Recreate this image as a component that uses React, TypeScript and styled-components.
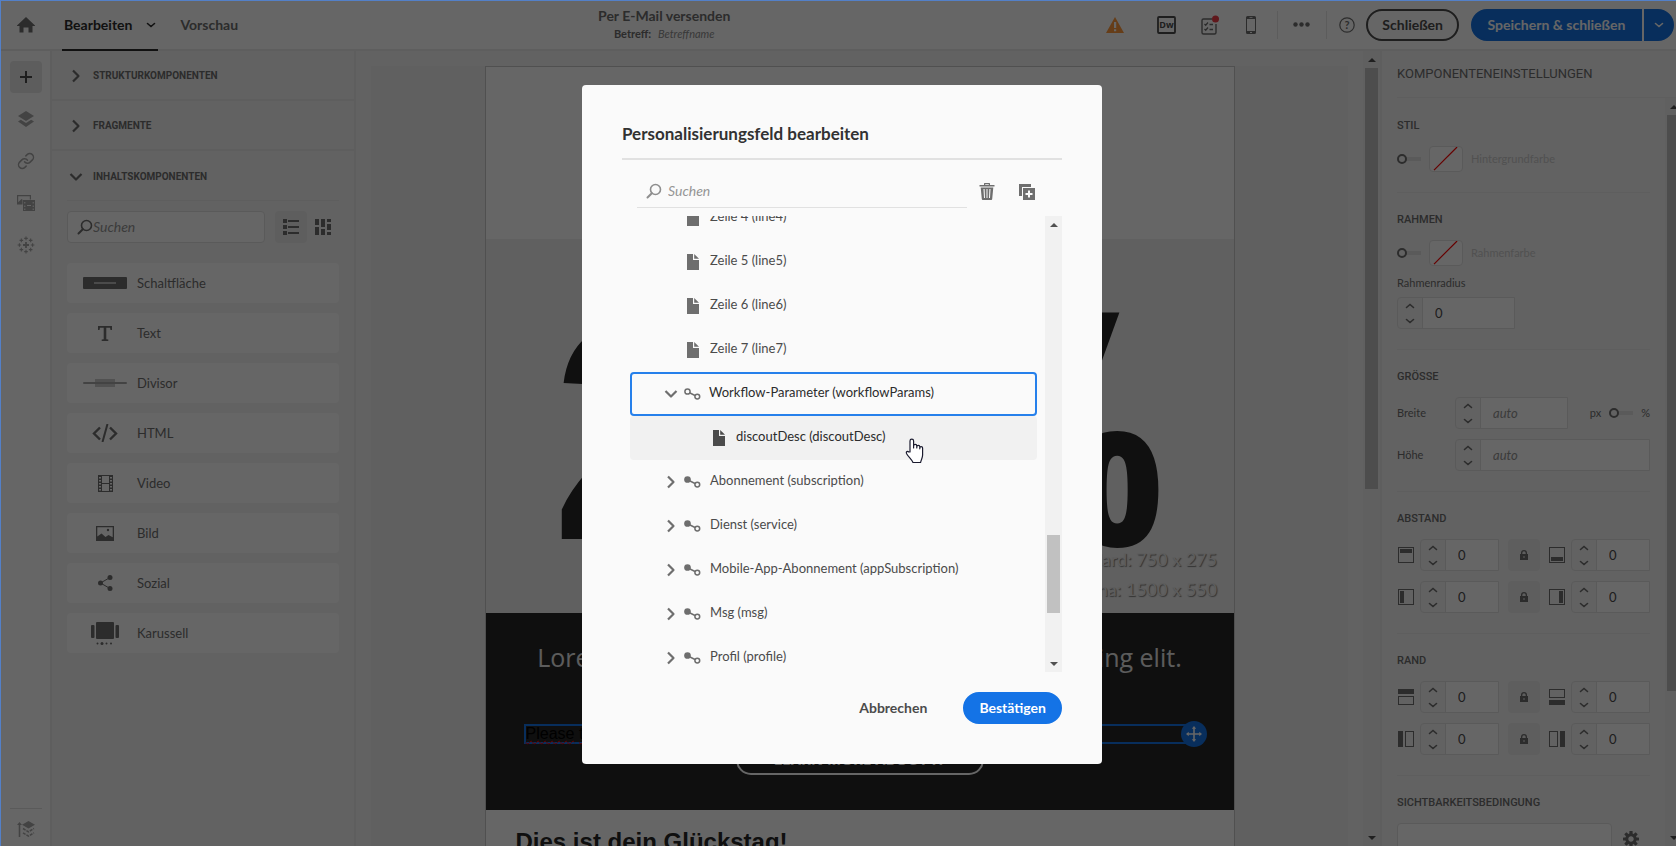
import React from 'react';
import styled, { createGlobalStyle } from 'styled-components';
import { Link } from 'lucide-react';

const GlobalStyle = createGlobalStyle`
  *, *::before { box-sizing: border-box; }
  body {
    margin: 0;
    overflow: hidden;
    font-family: Lato, "Open Sans", sans-serif;
    font-size: 13px;
    line-height: 18px;
    color: #6e6e6e;
    background: #f5f5f5;
  }
  button, input { font: inherit; color: inherit; }
  button { border: 0; padding: 0; background: none; cursor: pointer; }
  h1, h2, h3, p, ul { margin: 0; padding: 0; font-weight: inherit; font-size: inherit; }
  ul { list-style: none; }
  svg { display: block; flex: none; }
`;

/* ---------- icons ---------- */

type IconProps = { children: React.ReactNode; w?: number; h?: number; box?: string };
const Svg = ({ children, w = 16, h = 16, box }: IconProps) => (
  <svg width={w} height={h} viewBox={box ?? `0 0 ${w} ${h}`} fill="currentColor" aria-hidden="true">
    {children}
  </svg>
);

const HomeIcon = () => (
  <Svg w={18} h={16}><path d="M9 0l9 8.6V9h-2.500v6.500h-4v-5h-5v5h-4V9H0v-.4z" /></Svg>
);
const ChevronRight = () => (
  <Svg w={14} h={14}><path d="M4 1.500L9.500 7 4 12.500" fill="none" stroke="currentColor" strokeWidth="2.200" strokeLinejoin="round" /></Svg>
);
const ChevronDown = () => (
  <Svg w={14} h={14}><path d="M1.500 4L7 9.500 12.500 4" fill="none" stroke="currentColor" strokeWidth="2.200" strokeLinejoin="round" /></Svg>
);
const SmallChevron = ({ up }: { up?: boolean }) => (
  <Svg w={10} h={6}><path d={up ? 'M1.500 4.500L5 1.500l3.500 3' : 'M1.500 1.500L5 4.500l3.500-3'} fill="none" stroke="currentColor" strokeWidth="1.600" strokeLinecap="round" /></Svg>
);
const PlusIcon = () => <Svg w={12} h={12}><path d="M5 0h2v5h5v2H7v5H5V7H0V5h5z" /></Svg>;
const LayersIcon = () => (
  <Svg><path d="M8 0l8 5-8 5-8-5z" /><path d="M2.800 8.800L8 12l5.200-3.200L16 10.600 8 16l-8-5.400z" /></Svg>
);
const MediaIcon = () => (
  <Svg w={18} h={16}>
    <path d="M0 0h14v4.500h-1.200V1.200H1.200v6L4.500 4l1 .8V9.500H0z" />
    <path d="M6 5h12v11H6zm1.300 2v1.500h1V7zm0 3.500V12h1v-1.500zm0 3V15h1v-1.500zM15.700 7v1.500h1V7zm0 3.500V12h1v-1.500zm0 3V15h1v-1.500zM10 10v1h4v-1z" fillRule="evenodd" />
  </Svg>
);
const SparkIcon = () => (
  <Svg box="-9 -9 18 18" w={18} h={18}>
    <path d="M-.9-3h1.800v2.100H3v1.800H.9V3H-.9V.9H-3V-.9h2.100z" />
    {[0, 45, 90, 135, 180, 225, 270, 315].map((a) => {
      const x = 6.6 * Math.cos((a * Math.PI) / 180);
      const y = 6.6 * Math.sin((a * Math.PI) / 180);
      return <path key={a} d={`M${x - 1.8} ${y}h3.600M${x} ${y - 1.8}v3.600`} stroke="currentColor" strokeWidth="1.100" />;
    })}
  </Svg>
);
const TreeOrderIcon = () => (
  <Svg w={18} h={17}>
    <path d="M2.500 1L5 4H3.300v12H1.700V4H0z" />
    <path d="M11.500 0L18 3.800l-6.500 3.800L5 3.800z" />
    <path d="M6 7.500l5.500 3.300L17 7.500M6 11.800l5.500 3.300 5.500-3.300" fill="none" stroke="currentColor" strokeWidth="1.500" strokeDasharray="3 1" />
  </Svg>
);
const SearchIcon = () => (
  <Svg><circle cx="9.500" cy="6.500" r="5" fill="none" stroke="currentColor" strokeWidth="1.600" /><path d="M5.800 10.200L1.500 14.500" stroke="currentColor" strokeWidth="2" strokeLinecap="round" /></Svg>
);
const ListIcon = () => (
  <Svg>{[0, 6, 12].map((y) => <path key={y} d={`M0 ${y}h4v4H0zM5 ${y + 1}h11v2H5z`} />)}</Svg>
);
const GridIcon = () => (
  <Svg><path d="M0 0h4v6H0zM0 8h4v8H0zM6 0h4v8H6zM6 10h4v6H6zM12 0h4v3h-4zM12 5h4v6h-4zM12 13h4v3h-4z" /></Svg>
);
const WarningIcon = () => (
  <Svg w={18} h={16}><path d="M9 0l9 16H0zM8 5v6h2.200V5zm0 7.300v2h2.200v-2z" fillRule="evenodd" /></Svg>
);
const DwIcon = () => (
  <Svg w={19} h={18}>
    <rect x="1" y="1" width="17" height="16" rx="1" fill="none" stroke="#4b4b4b" strokeWidth="1.800" />
    <text x="9.500" y="12" textAnchor="middle" fill="#4b4b4b" fontSize="9" fontWeight="700" fontFamily="Open Sans, sans-serif">Dw</text>
  </Svg>
);
const TasksIcon = () => (
  <Svg w={19} h={20}>
    <path d="M12 4H3.500A1.500 1.500 0 002 5.500v12A1.500 1.500 0 003.500 19h11a1.500 1.500 0 001.500-1.500V9" fill="none" stroke="currentColor" strokeWidth="1.400" />
    <path d="M4.500 9l1.200 1.200L8 7.500M4.500 14l1.200 1.200L8 12.500M9.500 9.500H13M9.500 14.500H13" fill="none" stroke="currentColor" strokeWidth="1.300" />
    <circle cx="15.500" cy="4" r="3.500" fill="#f03c46" />
  </Svg>
);
const PhoneIcon = () => (
  <Svg w={10} h={18}><path d="M1.500 0h7A1.500 1.500 0 0110 1.500v15A1.500 1.500 0 018.500 18h-7A1.500 1.500 0 010 16.500v-15A1.500 1.500 0 011.500 0zM1 3v12h8V3zm2.500-1.800v.8h3v-.8zM4 16v1h2v-1z" fillRule="evenodd" /></Svg>
);
const DotsIcon = () => (
  <Svg w={17} h={5}><circle cx="2.500" cy="2.500" r="2.200" /><circle cx="8.500" cy="2.500" r="2.200" /><circle cx="14.500" cy="2.500" r="2.200" /></Svg>
);
const HelpIcon = () => (
  <Svg>
    <circle cx="8" cy="8" r="7.200" fill="none" stroke="currentColor" strokeWidth="1.200" />
    <text x="8" y="12" textAnchor="middle" fontSize="11" fontWeight="700">?</text>
  </Svg>
);
const LockIcon = () => (
  <Svg w={10} h={10}><path d="M2 4V3a3 3 0 016 0v1h1v6H1V4zm1.300 0h3.400V3a1.700 1.700 0 00-3.400 0zM4.500 6v2h1V6z" fillRule="evenodd" /></Svg>
);
const GearIcon = () => (
  <Svg box="-8 -8 16 16">
    {[0, 45, 90, 135, 180, 225, 270, 315].map((a) => <rect key={a} x="-1.600" y="-8" width="3.200" height="5" rx=".5" transform={`rotate(${a})`} />)}
    <circle r="4.200" fill="none" stroke="currentColor" strokeWidth="3" />
  </Svg>
);
const TrashIcon = () => (
  <Svg w={16} h={17}>
    <path d="M5 2V.6A.6.6 0 015.600 0h4.800a.6.6 0 01.6.6V2h4.500v1.500H.5V2zm1.200 0h3.600v-.8H6.200z" fillRule="evenodd" />
    <path d="M1.700 4.500h12.600L13.200 16a1 1 0 01-1 1H3.800a1 1 0 01-1-1zM4.500 6l.5 9h1l-.4-9zm3 0v9h1V6zm2.900 0l-.4 9h1l.5-9z" fillRule="evenodd" />
  </Svg>
);
const AddCopyIcon = () => (
  <Svg><path d="M0 0h12v3H3v9H0z" /><path d="M4 4h12v12H4zm5 2.500V9H6.500v2H9v2.500h2V11h2.500V9H11V6.500z" fillRule="evenodd" /></Svg>
);
const FileIcon = () => <Svg w={12} h={16}><path d="M0 0h6v6h6v10H0z" /><path d="M7.200 0L12 4.800H7.200z" /></Svg>;
const LinkNodeIcon = ({ open }: { open?: boolean }) => (
  <Svg w={17} h={12}>
    <path d="M3 3.500l10 5" stroke="currentColor" strokeWidth="1.400" />
    <circle cx="3.500" cy="3.500" r="2.600" fill={open ? '#fafafa' : 'currentColor'} stroke="currentColor" strokeWidth="1.500" />
    <circle cx="13.300" cy="8.600" r="2.400" fill="#fafafa" stroke="currentColor" strokeWidth="1.500" />
  </Svg>
);
const MoveIcon = () => (
  <Svg><path d="M8 0l2.200 2.700H8.800v4.500h4.500V5.800L16 8l-2.700 2.200V8.800H8.800v4.500h1.400L8 16l-2.200-2.700h1.400V8.800H2.700v1.400L0 8l2.700-2.200v1.400h4.500V2.700H5.800z" /></Svg>
);

const ButtonGlyph = () => (
  <Svg w={44} h={12}><rect width="44" height="12" rx="1" /><rect x="11" y="5" width="22" height="2" fill="#bbb" /></Svg>
);
const TextGlyph = () => <Svg w={14} h={15}><path d="M0 0h14v4h-1.500l-.5-2.200H8.300v11.400l2 .4V15H3.700v-1.400l2-.4V1.800H2L1.500 4H0z" /></Svg>;
const DividerGlyph = () => (
  <Svg w={44} h={8}><rect x="12" width="20" height="8" fill="#cacaca" /><rect y="3" width="44" height="2" rx="1" fill="#a8a8a8" /></Svg>
);
const HtmlGlyph = () => (
  <Svg w={26} h={18}><path d="M8 3.500L2 9.500l6 6M18 3.500l6 6-6 6" fill="none" stroke="currentColor" strokeWidth="2.400" /><path d="M15.500 0l-5 18" stroke="currentColor" strokeWidth="2" /></Svg>
);
const VideoGlyph = () => (
  <Svg w={15} h={17}><path d="M0 0h15v17H0zM4 1v7h7V1zm0 8v7h7V9zM1 2v1.500h2V2zm0 3v1.500h2V5zm0 3v1.500h2V8zm0 3v1.500h2V11zm0 3v1.500h2V14zm11-12v1.500h2V2zm0 3v1.500h2V5zm0 3v1.500h2V8zm0 3v1.500h2V11zm0 3v1.500h2V14z" fillRule="evenodd" /></Svg>
);
const ImageGlyph = () => (
  <Svg w={18} h={15}><path d="M0 0h18v15H0zM1.300 1.300v9.200L5.500 7.500l4 3.500 3-2 4.200 2.200V1.300z" fillRule="evenodd" /><circle cx="12" cy="4" r="1.200" /></Svg>
);
const ShareGlyph = () => (
  <Svg w={15} h={16}><circle cx="2.500" cy="8" r="2.500" /><circle cx="12" cy="2.500" r="2.500" /><circle cx="12" cy="13.500" r="2.500" /><path d="M12 2.500L2.500 8l9.500 5.500" fill="none" stroke="currentColor" /></Svg>
);
const CarouselGlyph = () => (
  <Svg w={28} h={23}>
    <rect x="5" width="18" height="17" rx="1" /><rect y="3" width="3.500" height="13" rx="1" /><rect x="24.500" y="3" width="3.500" height="13" rx="1" />
    <circle cx="6.500" cy="21.500" r="1" /><circle cx="11" cy="21.500" r="1.500" /><circle cx="15.500" cy="21.500" r="1" /><circle cx="20" cy="21.500" r="1" />
  </Svg>
);

/* ---------- shell ---------- */

const Page = styled.div`
  display: flex;
  flex-direction: column;
  height: 100vh;
  overflow: hidden;
`;
const Header = styled.header`
  display: flex;
  flex: none;
  align-items: stretch;
  justify-content: space-between;
  height: 51px;
  padding: 0 2px 0 17px;
  background: #fff;
  border-bottom: 2px solid #eaeaea;
`;
const HeaderGroup = styled.div`
  display: flex;
  align-items: center;
`;
const Tabs = styled.nav`
  display: flex;
  align-self: stretch;
  gap: 20px;
  margin: 0 0 -2px 27px;
  font-size: 14px;
  font-weight: 700;
`;
const Tab = styled.button<{ $active?: boolean }>`
  display: flex;
  align-items: center;
  gap: 14px;
  padding: 1px 2px 0;
  color: ${(p) => (p.$active ? '#2c2c2c' : '#6e6e6e')};
  border-bottom: 2px solid ${(p) => (p.$active ? '#2c2c2c' : 'transparent')};
`;
const TitleBlock = styled.div`
  padding-top: 7px;
  text-align: center;
`;
const PageTitle = styled.h1`
  font-size: 14px;
  font-weight: 700;
`;
const Subject = styled.p`
  font-size: 11px;
  em { margin-left: 4px; color: #8e8e8e; }
`;
const Tools = styled(HeaderGroup)`
  padding-left: 18px;
`;
const Tool = styled.button<{ $space: number; $warn?: boolean }>`
  display: flex;
  margin-right: ${(p) => p.$space}px;
  color: ${(p) => (p.$warn ? '#ff9a3c' : '#6e6e6e')};
`;
const Rule = styled.span<{ $space: number }>`
  width: 1px;
  height: 28px;
  margin-right: ${(p) => p.$space}px;
  background: #e6e6e6;
`;
const Pill = styled.button<{ $primary?: boolean }>`
  height: 32px;
  padding: 0 14px;
  border: 2px solid ${(p) => (p.$primary ? '#1473e6' : '#4b4b4b')};
  border-radius: 16px;
  background: ${(p) => (p.$primary ? '#1473e6' : 'transparent')};
  color: ${(p) => (p.$primary ? '#fff' : '#4b4b4b')};
  font-size: 14px;
  font-weight: 700;
  white-space: nowrap;
`;
const SplitButton = styled.div`
  display: flex;
  gap: 2px;
  margin-left: 12px;
  ${Pill}:first-child { width: 171px; padding: 0; border-radius: 16px 0 0 16px; }
  ${Pill}:last-child { display: flex; align-items: center; padding: 0 8px; border-radius: 0 16px 16px 0; }
`;

const Body = styled.div`
  display: flex;
  flex: 1;
  min-height: 0;
`;
const Rail = styled.nav`
  display: flex;
  flex: none;
  flex-direction: column;
  justify-content: space-between;
  width: 52px;
  padding: 10px 8px 0 10px;
  background: #fff;
  border-right: 2px solid #eaeaea;
`;
const RailList = styled.div`
  display: flex;
  flex-direction: column;
  gap: 10px;
`;
const RailButton = styled.button<{ $active?: boolean }>`
  display: flex;
  align-items: center;
  justify-content: center;
  width: 32px;
  height: 32px;
  border-radius: 4px;
  background: ${(p) => (p.$active ? '#e8e8e8' : 'transparent')};
  color: ${(p) => (p.$active ? '#4b4b4b' : '#a8a8a8')};
`;
const RailFooter = styled.div`
  height: 38px;
  padding-top: 4px;
  border-top: 1px solid #e1e1e1;
`;

/* ---------- component library ---------- */

const Library = styled.aside`
  flex: none;
  width: 304px;
  border-right: 2px solid #eaeaea;
`;
const Accordion = styled.button<{ $open?: boolean }>`
  display: flex;
  align-items: center;
  gap: 10px;
  width: ${(p) => (p.$open ? '272px' : '100%')};
  height: 50px;
  margin-left: ${(p) => (p.$open ? '15px' : '0')};
  padding: 2px 0 0 ${(p) => (p.$open ? '2px' : '17px')};
  border-bottom: ${(p) => (p.$open ? '1px' : '2px')} solid #eaeaea;
  font-family: Roboto, sans-serif;
  font-size: 10px;
  font-weight: 700;
  text-transform: uppercase;
`;
const LibraryBody = styled.div`
  padding: 10px 15px;
`;
const FilterRow = styled.div`
  display: flex;
  align-items: center;
  margin-bottom: 20px;
`;
const SearchBox = styled.label`
  display: flex;
  flex: 1;
  min-width: 0;
  align-items: center;
  height: 32px;
  margin-right: 10px;
  padding-left: 9px;
  border: 1px solid #e1e1e1;
  border-radius: 4px;
  background: #fff;
`;
const SearchInput = styled.input`
  flex: 1;
  width: 100%;
  min-width: 0;
  padding: 0;
  border: 0;
  outline: 0;
  background: none;
  font-size: 14px;
  &::placeholder { color: #959595; font-style: italic; opacity: 1; }
`;
const SquareButton = styled.button<{ $fill?: boolean }>`
  display: flex;
  flex: none;
  align-items: center;
  justify-content: center;
  justify-self: center;
  width: 32px;
  height: 32px;
  border-radius: 4px;
  background: ${(p) => (p.$fill ? '#ebebeb' : 'transparent')};
`;
const CardList = styled.ul`
  display: flex;
  flex-direction: column;
  gap: 10px;
`;
const Card = styled.li`
  display: grid;
  grid-template-columns: 44px 1fr;
  align-items: center;
  gap: 10px;
  height: 40px;
  padding-left: 16px;
  border-radius: 4px;
  background: #fff;
  svg { justify-self: center; }
`;

/* ---------- canvas ---------- */

const Canvas = styled.main`
  display: flex;
  flex: 1;
  min-width: 0;
`;
const Stage = styled.div`
  flex: 1;
  min-width: 0;
  margin: 15px 15px 0;
  background: #f0f0f0;
`;
const Mail = styled.article`
  width: 750px;
  max-width: 100%;
  margin: 0 auto;
  border: 1px solid #c8c8c8;
  border-bottom: 0;
  background: #fff;
`;
const MailTop = styled.div`
  height: 172px;
`;
const Banner = styled.svg`
  width: 100%;
  height: auto;
  background: #efefef;
`;
const BannerFigure = styled.g`
  fill: #282828;
  font-family: "Open Sans", sans-serif;
  font-weight: 800;
`;
const BannerCaption = styled.g`
  fill: #e8e8e8;
  font-size: 18px;
  text-anchor: end;
  text-shadow: 1px 1px 1px #808080;
`;
const MailDark = styled.section`
  display: flex;
  flex-direction: column;
  align-items: center;
  height: 197px;
  padding: 27px 38px 0;
  background: #262626;
`;
const Lead = styled.p`
  height: 84px;
  font-family: "Open Sans", sans-serif;
  font-size: 25px;
  line-height: 34px;
  color: #e6e6e6;
  white-space: nowrap;
`;
const SelectedText = styled.div`
  position: relative;
  width: 100%;
  height: 20px;
  border: 2px solid #1473e6;
  font-family: "Liberation Sans", sans-serif;
  font-size: 16px;
  line-height: 16px;
  color: #000;
  span { text-decoration: underline wavy #f00 1px; }
`;
const MoveHandle = styled.button`
  position: absolute;
  top: -5px;
  right: -13px;
  display: flex;
  align-items: center;
  justify-content: center;
  width: 26px;
  height: 26px;
  border-radius: 50%;
  background: #1473e6;
  color: #fff;
`;
const MailButton = styled.a`
  width: 248px;
  height: 30px;
  margin-top: 1px;
  border: 2px solid #fff;
  border-radius: 15px;
  color: #fff;
  font-family: "Open Sans", sans-serif;
  font-size: 15px;
  font-weight: 700;
  line-height: 24px;
  text-align: center;
  text-decoration: none;
`;
const MailHeading = styled.h2`
  padding: 17px 30px;
  color: #262626;
  font-family: "Liberation Sans", sans-serif;
  font-size: 24px;
  font-weight: 700;
  line-height: 30px;
`;

/* ---------- scrollbar ---------- */

const Track = styled.div<{ $clip?: boolean }>`
  display: flex;
  flex: none;
  flex-direction: column;
  align-items: ${(p) => (p.$clip ? 'flex-start' : 'center')};
  width: ${(p) => (p.$clip ? '11px' : '17px')};
  padding: 0 ${(p) => (p.$clip ? '0 0 2px' : '0')};
  background: #f1f1f1;
  overflow: hidden;
`;
const ArrowCell = styled.span`
  display: flex;
  flex: none;
  align-items: center;
  justify-content: center;
  width: 13px;
  height: 17px;
  color: #505050;
`;
const Thumb = styled.div<{ $before: number; $size: number }>`
  flex: none;
  width: 13px;
  height: ${(p) => p.$size}%;
  margin-top: ${(p) => p.$before}px;
  background: #c1c1c1;
`;
const Fill = styled.span`
  flex: 1;
`;
const Scrollbar = ({ before = 0, size, clip }: { before?: number; size: number; clip?: boolean }) => (
  <Track $clip={clip} aria-hidden="true">
    <ArrowCell><Svg w={8} h={4}><path d="M0 4l4-4 4 4z" /></Svg></ArrowCell>
    <Thumb $before={before} $size={size} />
    <Fill />
    <ArrowCell><Svg w={8} h={4}><path d="M0 0l4 4 4-4z" /></Svg></ArrowCell>
  </Track>
);

/* ---------- settings ---------- */

const Settings = styled.aside`
  display: flex;
  flex: none;
  flex-direction: column;
  width: 296px;
  border-left: 2px solid #eaeaea;
`;
const SettingsTitle = styled.h2`
  height: 47px;
  margin-left: 15px;
  padding-top: 14px;
  border-bottom: 1px solid #eaeaea;
  font-family: Roboto, sans-serif;
  font-size: 13px;
`;
const SettingsBody = styled.div`
  display: flex;
  flex: 1;
  min-height: 0;
  overflow: hidden;
`;
const Sections = styled.div`
  flex: 1;
  margin: 0 15px;
  padding-top: 1px;
`;
const Section = styled.section`
  padding: 18px 0 20px;
  border-bottom: 1px solid #eaeaea;
`;
const SectionTitle = styled.h3`
  margin-bottom: 11px;
  font-family: Roboto, sans-serif;
  font-size: 11px;
  font-weight: 500;
  text-transform: uppercase;
`;
const ColorRow = styled.label`
  display: flex;
  align-items: center;
  height: 26px;
  color: #cacaca;
  font-size: 11px;
`;
const Toggle = styled.input`
  display: flex;
  align-items: center;
  width: 24px;
  height: 10px;
  margin: 0;
  appearance: none;
  background: linear-gradient(#e1e1e1, #e1e1e1) right center / 18px 4px no-repeat;
  &::before {
    width: 10px;
    height: 10px;
    border: 2px solid #6e6e6e;
    border-radius: 50%;
    background: #f5f5f5;
    content: "";
  }
`;
const Swatch = styled.svg`
  margin: 0 8px;
  border: 1px solid #e1e1e1;
  border-radius: 4px;
  background: #fff;
`;
const FieldLabel = styled.label`
  display: block;
  padding: 8px 0 5px;
  font-size: 11px;
`;
const StepperBox = styled.div`
  display: flex;
  min-width: 0;
  height: 32px;
  border: 1px solid #e1e1e1;
  border-radius: 4px 0 0 4px;
`;
const StepperButtons = styled.div`
  display: flex;
  flex: none;
  flex-direction: column;
  justify-content: space-between;
  width: 25px;
  padding: 5px 0 4px;
  border-right: 1px solid #e1e1e1;
  button { display: flex; justify-content: center; }
`;
const StepperInput = styled.input`
  flex: 1;
  min-width: 0;
  width: 100%;
  padding: 0 12px;
  border: 0;
  border-radius: 0;
  outline: 0;
  background: #fff;
  color: #4b4b4b;
  font-size: 13px;
  &::placeholder { color: #959595; font-style: italic; opacity: 1; }
`;
const Radius = styled.div`
  width: 118px;
`;
const SizeRow = styled.div`
  display: grid;
  grid-template-columns: 58px 113px 1fr;
  align-items: center;
  font-size: 11px;
  & + & { grid-template-columns: 58px 1fr; margin-top: 10px; }
`;
const Unit = styled.label`
  display: flex;
  align-items: center;
  justify-content: flex-end;
  gap: 8px;
`;
const PairGrid = styled.div`
  display: grid;
  grid-template-columns: 23px 79px 1fr 23px 79px;
  align-items: center;
  row-gap: 10px;
`;
const ConditionRow = styled.div`
  display: flex;
  align-items: center;
  justify-content: space-between;
  padding-right: 11px;
`;
const ConditionInput = styled.input`
  width: 215px;
  height: 32px;
  border: 1px solid #e1e1e1;
  border-radius: 4px;
  background: #fff;
`;

const Stepper = ({ id, label, value, placeholder }: { id: string; label: string; value?: string; placeholder?: string }) => (
  <StepperBox>
    <StepperButtons>
      <button type="button" aria-label={`${label} erhöhen`}><SmallChevron up /></button>
      <button type="button" aria-label={`${label} verringern`}><SmallChevron /></button>
    </StepperButtons>
    <StepperInput id={id} aria-label={label} defaultValue={value} placeholder={placeholder} />
  </StepperBox>
);

const Frame = <rect x="1.500" y="1.500" width="15" height="15" fill="none" stroke="currentColor" />;
const sides: Record<string, React.ReactNode> = {
  'Abstand oben': <>{Frame}<rect x="3" y="3" width="12" height="4" /></>,
  'Abstand unten': <>{Frame}<rect x="3" y="11" width="12" height="4" /></>,
  'Abstand links': <>{Frame}<rect x="3" y="3" width="4" height="12" /></>,
  'Abstand rechts': <>{Frame}<rect x="11" y="3" width="4" height="12" /></>,
  'Rand oben': <><rect x="1" y="1" width="16" height="5" /><rect x="1.500" y="8.500" width="15" height="8" fill="none" stroke="currentColor" /></>,
  'Rand unten': <><rect x="1" y="12" width="16" height="5" /><rect x="1.500" y="1.500" width="15" height="8" fill="none" stroke="currentColor" /></>,
  'Rand links': <><rect x="1" y="1" width="5" height="16" /><rect x="8.500" y="1.500" width="8" height="15" fill="none" stroke="currentColor" /></>,
  'Rand rechts': <><rect x="12" y="1" width="5" height="16" /><rect x="1.500" y="1.500" width="8" height="15" fill="none" stroke="currentColor" /></>,
};

const SidePair = ({ a, b }: { a: string; b: string }) => (
  <>
    <Svg w={18} h={18}>{sides[a]}</Svg>
    <Stepper id={a.replace(' ', '-')} label={a} value="0" />
    <SquareButton $fill aria-label={`${a} und ${b} verknüpfen`}><LockIcon /></SquareButton>
    <Svg w={18} h={18}>{sides[b]}</Svg>
    <Stepper id={b.replace(' ', '-')} label={b} value="0" />
  </>
);

const ColorField = ({ label }: { label: string }) => (
  <ColorRow>
    <Toggle type="checkbox" />
    <Swatch width="34" height="26" viewBox="0 0 34 26"><path d="M4 25L29 0" stroke="#f00" strokeWidth="1.300" /></Swatch>
    {label}
  </ColorRow>
);

/* ---------- dialog ---------- */

const Overlay = styled.div`
  position: fixed;
  inset: 0;
  display: flex;
  align-items: center;
  justify-content: center;
  padding: 3px 0 0 8px;
  background: rgba(0, 0, 0, 0.6);
`;
const Dialog = styled.section`
  position: relative;
  width: 520px;
  padding: 40px;
  border-radius: 4px;
  background: #fafafa;
`;
const DialogTitle = styled.h2`
  height: 35px;
  margin-bottom: 15px;
  border-bottom: 2px solid #e1e1e1;
  color: #323232;
  font-size: 17px;
  font-weight: 700;
`;
const DialogTools = styled.div`
  display: flex;
  align-items: center;
  gap: 24px;
  margin-bottom: 8px;
  padding: 0 27px 0 15px;
`;
const DialogSearch = styled.label`
  display: flex;
  flex: 1;
  align-items: center;
  gap: 6px;
  height: 33px;
  margin-right: -12px;
  padding-left: 9px;
  border-bottom: 1px solid #e1e1e1;
  color: #8e8e8e;
`;
const TreeArea = styled.div`
  display: flex;
  gap: 8px;
  height: 456px;
  padding-left: 8px;
  overflow: hidden;
`;
const Tree = styled.ul`
  flex: 1;
  margin-top: -20px;
`;
const TreeRow = styled.li<{ $depth: number; $focus?: boolean; $hover?: boolean }>`
  display: flex;
  align-items: center;
  gap: 6px;
  height: 44px;
  padding-left: ${(p) => p.$depth}px;
  border: 2px solid ${(p) => (p.$focus ? '#2680eb' : 'transparent')};
  border-radius: 4px;
  background: ${(p) => (p.$hover ? '#f1f1f1' : 'transparent')};
  color: ${(p) => (p.$hover ? '#4b4b4b' : '#6e6e6e')};
`;
const TreeLabel = styled.span<{ $leaf?: boolean; $strong?: boolean }>`
  padding: 0 0 4px ${(p) => (p.$leaf ? 5 : p.$strong ? 2 : 3)}px;
  color: ${(p) => (p.$strong ? '#2c2c2c' : '#4b4b4b')};
  white-space: nowrap;
`;
const DialogActions = styled.footer`
  display: flex;
  align-items: center;
  justify-content: flex-end;
  gap: 36px;
  margin-top: 20px;
`;
const QuietButton = styled.button`
  color: #4b4b4b;
  font-size: 14px;
  font-weight: 700;
`;
const Cursor = styled.svg`
  position: absolute;
  top: 353px;
  left: 323px;
`;
const WindowEdge = styled.div`
  position: fixed;
  inset: 0;
  border-top: 1px solid #5380c8;
  border-left: 1px solid #5380c8;
  pointer-events: none;
`;

type Node = { label: string; kind: 'file' | 'link'; state?: 'focus' | 'hover' };
const nodes: Node[] = [
  { label: 'Zeile 4 (line4)', kind: 'file' },
  { label: 'Zeile 5 (line5)', kind: 'file' },
  { label: 'Zeile 6 (line6)', kind: 'file' },
  { label: 'Zeile 7 (line7)', kind: 'file' },
  { label: 'Workflow-Parameter (workflowParams)', kind: 'link', state: 'focus' },
  { label: 'discoutDesc (discoutDesc)', kind: 'file', state: 'hover' },
  { label: 'Abonnement (subscription)', kind: 'link' },
  { label: 'Dienst (service)', kind: 'link' },
  { label: 'Mobile-App-Abonnement (appSubscription)', kind: 'link' },
  { label: 'Msg (msg)', kind: 'link' },
  { label: 'Profil (profile)', kind: 'link' },
];

const cards: [string, React.ReactNode][] = [
  ['Schaltfläche', <ButtonGlyph />],
  ['Text', <TextGlyph />],
  ['Divisor', <DividerGlyph />],
  ['HTML', <HtmlGlyph />],
  ['Video', <VideoGlyph />],
  ['Bild', <ImageGlyph />],
  ['Sozial', <ShareGlyph />],
  ['Karussell', <CarouselGlyph />],
];

export default function App() {
  return (
    <>
      <GlobalStyle />
      <Page>
        <Header>
          <HeaderGroup>
            <HomeIcon />
            <Tabs>
              <Tab $active>Bearbeiten <SmallChevron /></Tab>
              <Tab>Vorschau</Tab>
            </Tabs>
          </HeaderGroup>
          <TitleBlock>
            <PageTitle>Per E-Mail versenden</PageTitle>
            <Subject><b>Betreff:</b> <em>Betreffname</em></Subject>
          </TitleBlock>
          <Tools>
            <Tool $space={33} $warn aria-label="Warnungen"><WarningIcon /></Tool>
            <Tool $space={24} aria-label="Dreamweaver"><DwIcon /></Tool>
            <Tool $space={27} aria-label="Aufgaben"><TasksIcon /></Tool>
            <Tool $space={21} aria-label="Mobilgerät"><PhoneIcon /></Tool>
            <Rule $space={15} />
            <Tool $space={16} aria-label="Mehr"><DotsIcon /></Tool>
            <Rule $space={12} />
            <Tool $space={11} aria-label="Hilfe"><HelpIcon /></Tool>
            <Pill>Schließen</Pill>
            <SplitButton>
              <Pill $primary>Speichern &amp; schließen</Pill>
              <Pill $primary aria-label="Weitere Optionen"><SmallChevron /></Pill>
            </SplitButton>
          </Tools>
        </Header>
        <Body>
          <Rail>
            <RailList>
              <RailButton $active aria-label="Komponenten"><PlusIcon /></RailButton>
              <RailButton aria-label="Ebenen"><LayersIcon /></RailButton>
              <RailButton aria-label="Links"><Link size={18} /></RailButton>
              <RailButton aria-label="Medien"><MediaIcon /></RailButton>
              <RailButton aria-label="Personalisierung"><SparkIcon /></RailButton>
            </RailList>
            <RailFooter><RailButton aria-label="Struktur"><TreeOrderIcon /></RailButton></RailFooter>
          </Rail>
          <Library>
            <Accordion><ChevronRight />Strukturkomponenten</Accordion>
            <Accordion><ChevronRight />Fragmente</Accordion>
            <Accordion $open><ChevronDown />Inhaltskomponenten</Accordion>
            <LibraryBody>
              <FilterRow>
                <SearchBox><SearchIcon /><SearchInput placeholder="Suchen" aria-label="Komponenten suchen" /></SearchBox>
                <SquareButton $fill aria-label="Liste"><ListIcon /></SquareButton>
                <SquareButton aria-label="Raster"><GridIcon /></SquareButton>
              </FilterRow>
              <CardList>
                {cards.map(([label, glyph]) => <Card key={label}>{glyph}{label}</Card>)}
              </CardList>
            </LibraryBody>
          </Library>
          <Canvas>
            <Stage>
              <Mail>
                <MailTop />
                <Banner viewBox="0 0 748 374" role="img" aria-label="Banner">
                  <text x="65" y="300" fill="#282828" fontFamily="Liberation Sans, sans-serif" fontWeight="700" fontSize="311">2</text>
                  <BannerFigure>
                    <text x="634" y="298" textAnchor="end" fontSize="310">/</text>
                    <text x="631" y="307" textAnchor="middle" fontSize="160">0</text>
                  </BannerFigure>
                  <BannerCaption>
                    <text x="731" y="327">Standard: 750 x 275</text>
                    <text x="731" y="357">Retina: 1500 x 550</text>
                  </BannerCaption>
                </Banner>
                <MailDark>
                  <Lead>Lorem ipsum dolor sit amet, consectetur adipiscing elit.</Lead>
                  <SelectedText>
                    <span>Please</span> <span>take</span>
                    <MoveHandle aria-label="Verschieben"><MoveIcon /></MoveHandle>
                  </SelectedText>
                  <MailButton href="#">LEARN MORE ABOUT IT</MailButton>
                </MailDark>
                <MailHeading>Dies ist dein Glückstag!</MailHeading>
              </Mail>
            </Stage>
            <Scrollbar size={53} />
          </Canvas>
          <Settings>
            <SettingsTitle>KOMPONENTENEINSTELLUNGEN</SettingsTitle>
            <SettingsBody>
              <Sections>
                <Section>
                  <SectionTitle>Stil</SectionTitle>
                  <ColorField label="Hintergrundfarbe" />
                </Section>
                <Section>
                  <SectionTitle>Rahmen</SectionTitle>
                  <ColorField label="Rahmenfarbe" />
                  <FieldLabel htmlFor="radius">Rahmenradius</FieldLabel>
                  <Radius><Stepper id="radius" label="Rahmenradius" value="0" /></Radius>
                </Section>
                <Section>
                  <SectionTitle>Grösse</SectionTitle>
                  <SizeRow>
                    <label htmlFor="width">Breite</label>
                    <Stepper id="width" label="Breite" placeholder="auto" />
                    <Unit>px <Toggle type="checkbox" /> %</Unit>
                  </SizeRow>
                  <SizeRow>
                    <label htmlFor="height">Höhe</label>
                    <Stepper id="height" label="Höhe" placeholder="auto" />
                  </SizeRow>
                </Section>
                <Section>
                  <SectionTitle>Abstand</SectionTitle>
                  <PairGrid>
                    <SidePair a="Abstand oben" b="Abstand unten" />
                    <SidePair a="Abstand links" b="Abstand rechts" />
                  </PairGrid>
                </Section>
                <Section>
                  <SectionTitle>Rand</SectionTitle>
                  <PairGrid>
                    <SidePair a="Rand oben" b="Rand unten" />
                    <SidePair a="Rand links" b="Rand rechts" />
                  </PairGrid>
                </Section>
                <Section>
                  <SectionTitle>Sichtbarkeitsbedingung</SectionTitle>
                  <ConditionRow>
                    <ConditionInput aria-label="Sichtbarkeitsbedingung" />
                    <button type="button" aria-label="Bedingung bearbeiten"><GearIcon /></button>
                  </ConditionRow>
                </Section>
              </Sections>
              <Scrollbar size={77} clip />
            </SettingsBody>
          </Settings>
        </Body>
      </Page>
      <Overlay>
        <Dialog role="dialog" aria-labelledby="dialog-title">
          <DialogTitle id="dialog-title">Personalisierungsfeld bearbeiten</DialogTitle>
          <DialogTools>
            <DialogSearch><SearchIcon /><SearchInput placeholder="Suchen" aria-label="Felder suchen" /></DialogSearch>
            <button type="button" aria-label="Löschen"><TrashIcon /></button>
            <button type="button" aria-label="Hinzufügen"><AddCopyIcon /></button>
          </DialogTools>
          <TreeArea>
            <Tree role="tree">
              {nodes.map(({ label, kind, state }) => (
                <TreeRow
                  key={label}
                  role="treeitem"
                  $depth={kind === 'link' ? 32 : state ? 81 : 55}
                  $focus={state === 'focus'}
                  $hover={state === 'hover'}
                >
                  {kind === 'link' && (state ? <ChevronDown /> : <ChevronRight />)}
                  {kind === 'link' ? <LinkNodeIcon open={!!state} /> : <FileIcon />}
                  <TreeLabel $leaf={kind === 'file'} $strong={!!state}>{label}</TreeLabel>
                </TreeRow>
              ))}
            </Tree>
            <Scrollbar before={302} size={17} />
          </TreeArea>
          <DialogActions>
            <QuietButton>Abbrechen</QuietButton>
            <Pill $primary>Bestätigen</Pill>
          </DialogActions>
          <Cursor width="19" height="26" viewBox="0 0 19 26" aria-hidden="true">
            <path
              d="M5 14V3a1.800 1.800 0 013.600 0v7V8a1.600 1.600 0 013.200 0v2-1.200a1.500 1.500 0 013 0v2-.8a1.400 1.400 0 012.800 0v7c0 3-1.500 4.500-2 7.500H8c-1-3-5-6-6.500-9-.8-1.800 1-2.700 2.300-1.500z"
              fill="#fff" stroke="#1a1a2e" strokeWidth="1.200" strokeLinejoin="round"
            />
          </Cursor>
        </Dialog>
      </Overlay>
      <WindowEdge />
    </>
  );
}
